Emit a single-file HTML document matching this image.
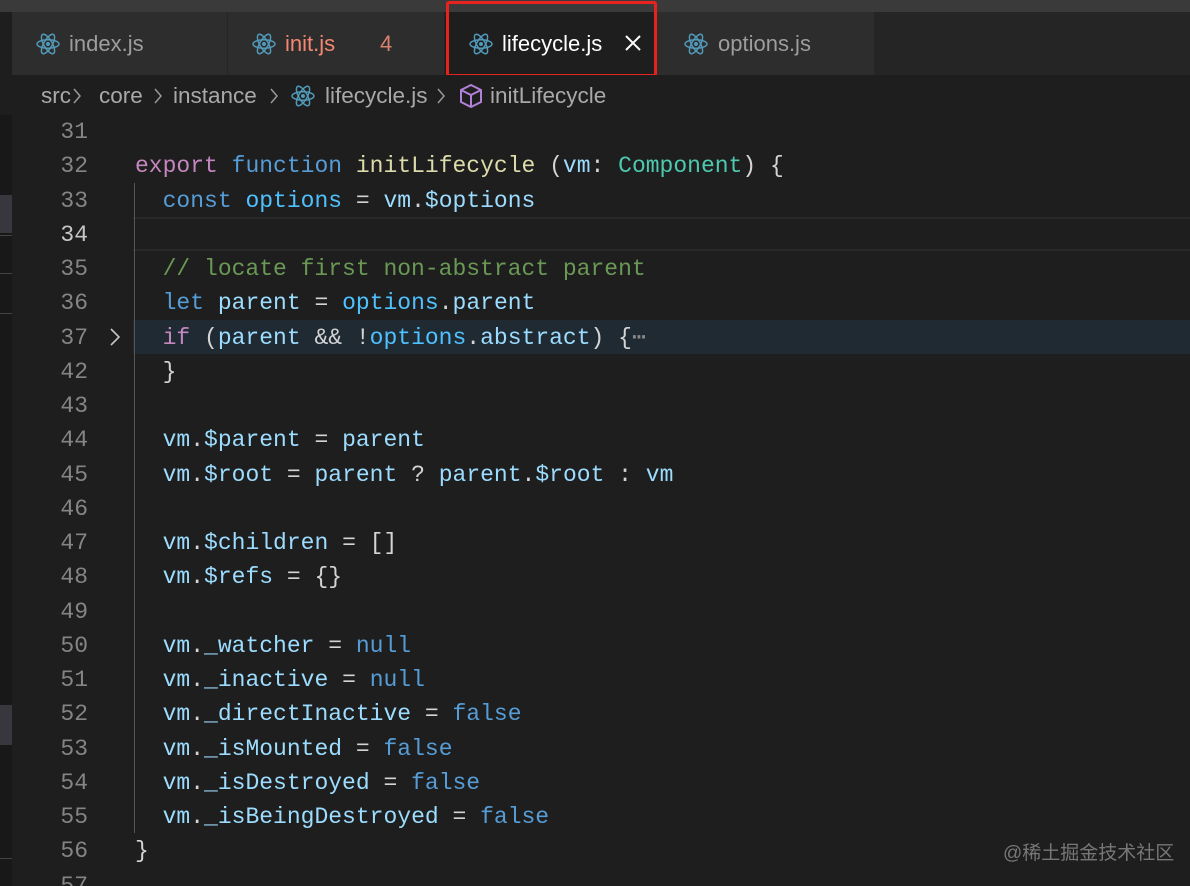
<!DOCTYPE html>
<html style="width:1190px;height:886px;overflow:hidden"><head><meta charset="utf-8"><style>
*{margin:0;padding:0;box-sizing:border-box}
body{width:1190px;height:886px;overflow:hidden;background:#1e1e1e;position:relative;font-family:"Liberation Sans",sans-serif}
.top{position:absolute;left:0;top:0;width:1190px;height:12px;background:#3a3a3a}
.tabs{position:absolute;left:12px;top:12px;width:1178px;height:63px;background:#252526}
.tab{position:absolute;top:0;height:63px;background:#2d2d2d;color:#9d9d9d;font-size:22px;line-height:63px;border-right:1px solid #252526}
.tab svg{position:absolute;top:20px}
.tab span{position:absolute}
.bc{position:absolute;left:0;top:75px;width:1190px;height:40px;background:#1e1e1e;color:#a9a9a9;font-size:22.5px;line-height:42px}
.bc span{position:absolute;top:0}
.bc .ch{color:#999}
.left{position:absolute;left:0;top:75px;width:12px;height:811px;background:#181818}
.code{position:absolute;left:12px;top:115px;width:1178px;height:771px;overflow:hidden;font-family:"Liberation Mono",monospace;font-size:23px;line-height:34.25px;color:#d4d4d4}
.row{position:relative;height:34.25px}
.ln{position:absolute;left:0;width:76px;text-align:right;color:#858585}
.tx{position:absolute;left:123px;white-space:pre}
.k{color:#c586c0}.s{color:#569cd6}.v{color:#9cdcfe}.f{color:#dcdcaa}.t{color:#4ec9b0}.c{color:#6a9955}.o{color:#4fc1ff}
</style></head><body>
<div class="top"></div>
<div class="left">
<div style="position:absolute;top:120px;width:12px;height:38px;background:#37373d"></div>
<div style="position:absolute;top:160px;width:12px;height:1px;background:#444"></div>
<div style="position:absolute;top:198px;width:12px;height:1px;background:#444"></div>
<div style="position:absolute;top:238px;width:12px;height:1px;background:#444"></div>
<div style="position:absolute;top:630px;width:12px;height:40px;background:#37373d"></div>
<div style="position:absolute;top:783px;width:12px;height:1px;background:#444"></div>
</div>
<div class="tabs">
<div class="tab" style="left:0;width:216px"><svg width="24" height="24" viewBox="-12 -12 24 24" style="left:24px"><g fill="none" stroke="#519aba" stroke-width="1.5"><ellipse rx="11" ry="4.2"/><ellipse rx="11" ry="4.2" transform="rotate(60)"/><ellipse rx="11" ry="4.2" transform="rotate(120)"/></g><circle r="2" fill="#519aba"/></svg><span style="left:57px">index.js</span></div>
<div class="tab" style="left:216px;width:217px;color:#f48771"><svg width="24" height="24" viewBox="-12 -12 24 24" style="left:24px"><g fill="none" stroke="#519aba" stroke-width="1.5"><ellipse rx="11" ry="4.2"/><ellipse rx="11" ry="4.2" transform="rotate(60)"/><ellipse rx="11" ry="4.2" transform="rotate(120)"/></g><circle r="2" fill="#519aba"/></svg><span style="left:57px">init.js</span><span style="left:152px;color:#d7826c">4</span></div>
<div class="tab" style="left:433px;width:212px;background:#1e1e1e;color:#fff"><svg width="24" height="24" viewBox="-12 -12 24 24" style="left:24px"><g fill="none" stroke="#519aba" stroke-width="1.5"><ellipse rx="11" ry="4.2"/><ellipse rx="11" ry="4.2" transform="rotate(60)"/><ellipse rx="11" ry="4.2" transform="rotate(120)"/></g><circle r="2" fill="#519aba"/></svg><span style="left:57px">lifecycle.js</span><svg width="18" height="18" viewBox="0 0 18 18" style="left:179px;top:22px"><path d="M2 2L16 16M16 2L2 16" stroke="#fff" stroke-width="2"/></svg></div>
<div class="tab" style="left:645px;width:218px"><svg width="24" height="24" viewBox="-12 -12 24 24" style="left:27px"><g fill="none" stroke="#519aba" stroke-width="1.5"><ellipse rx="11" ry="4.2"/><ellipse rx="11" ry="4.2" transform="rotate(60)"/><ellipse rx="11" ry="4.2" transform="rotate(120)"/></g><circle r="2" fill="#519aba"/></svg><span style="left:61px">options.js</span></div>
</div>
<div style="position:absolute;left:446px;top:1px;width:211px;height:76px;border:3px solid #e8231f;border-radius:3px"></div>
<div class="bc">
<span style="left:41px">src</span>
<svg width="10" height="16" viewBox="0 0 10 16" style="position:absolute;left:72px;top:13px"><path d="M2 1L8 8L2 15" fill="none" stroke="#999" stroke-width="1.5"/></svg>
<span style="left:99px">core</span>
<svg width="10" height="16" viewBox="0 0 10 16" style="position:absolute;left:153px;top:13px"><path d="M2 1L8 8L2 15" fill="none" stroke="#999" stroke-width="1.5"/></svg>
<span style="left:173px">instance</span>
<svg width="10" height="16" viewBox="0 0 10 16" style="position:absolute;left:269px;top:13px"><path d="M2 1L8 8L2 15" fill="none" stroke="#999" stroke-width="1.5"/></svg>
<svg width="24" height="24" viewBox="-12 -12 24 24" style="position:absolute;left:291px;top:9px"><g fill="none" stroke="#519aba" stroke-width="1.5"><ellipse rx="11" ry="4.2"/><ellipse rx="11" ry="4.2" transform="rotate(60)"/><ellipse rx="11" ry="4.2" transform="rotate(120)"/></g><circle r="2" fill="#519aba"/></svg>
<span style="left:325px">lifecycle.js</span>
<svg width="10" height="16" viewBox="0 0 10 16" style="position:absolute;left:436px;top:13px"><path d="M2 1L8 8L2 15" fill="none" stroke="#999" stroke-width="1.5"/></svg>
<svg width="24" height="26" viewBox="0 0 24 26" style="position:absolute;left:459px;top:8px"><path d="M12 2L22 7V19L12 24L2 19V7Z M2 7L12 12L22 7 M12 12V24" fill="none" stroke="#b180d7" stroke-width="2"/></svg>
<span style="left:490px">initLifecycle</span></div>
<div style="position:absolute;left:133px;top:320px;width:1057px;height:34px;background:#1f2a33"></div>
<div style="position:absolute;left:133px;top:217px;width:1057px;height:34px;border-top:2px solid #282828;border-bottom:2px solid #282828"></div>
<div style="position:absolute;left:134px;top:183px;width:1px;height:650px;background:#555"></div>
<svg width="12" height="20" viewBox="0 0 12 20" style="position:absolute;left:109px;top:327px"><path d="M2 2L10 10L2 18" fill="none" stroke="#c5c5c5" stroke-width="1.6"/></svg>
<div class="code"><div class="row"><span class="ln">31</span></div><div class="row"><span class="ln">32</span><span class="tx"><span class="k">export</span> <span class="s">function</span> <span class="f">initLifecycle</span> (<span class="v">vm</span>: <span class="t">Component</span>) {</span></div><div class="row"><span class="ln">33</span><span class="tx">  <span class="s">const</span> <span class="o">options</span> = <span class="v">vm</span>.<span class="v">$options</span></span></div><div class="row"><span class="ln" style="color:#c6c6c6">34</span></div><div class="row"><span class="ln">35</span><span class="tx">  <span class="c">// locate first non-abstract parent</span></span></div><div class="row"><span class="ln">36</span><span class="tx">  <span class="s">let</span> <span class="v">parent</span> = <span class="o">options</span>.<span class="v">parent</span></span></div><div class="row"><span class="ln">37</span><span class="tx">  <span class="k">if</span> (<span class="v">parent</span> &amp;&amp; !<span class="o">options</span>.<span class="v">abstract</span>) {<span style="color:#888">⋯</span></span></div><div class="row"><span class="ln">42</span><span class="tx">  }</span></div><div class="row"><span class="ln">43</span></div><div class="row"><span class="ln">44</span><span class="tx">  <span class="v">vm</span>.<span class="v">$parent</span> = <span class="v">parent</span></span></div><div class="row"><span class="ln">45</span><span class="tx">  <span class="v">vm</span>.<span class="v">$root</span> = <span class="v">parent</span> ? <span class="v">parent</span>.<span class="v">$root</span> : <span class="v">vm</span></span></div><div class="row"><span class="ln">46</span></div><div class="row"><span class="ln">47</span><span class="tx">  <span class="v">vm</span>.<span class="v">$children</span> = []</span></div><div class="row"><span class="ln">48</span><span class="tx">  <span class="v">vm</span>.<span class="v">$refs</span> = {}</span></div><div class="row"><span class="ln">49</span></div><div class="row"><span class="ln">50</span><span class="tx">  <span class="v">vm</span>.<span class="v">_watcher</span> = <span class="s">null</span></span></div><div class="row"><span class="ln">51</span><span class="tx">  <span class="v">vm</span>.<span class="v">_inactive</span> = <span class="s">null</span></span></div><div class="row"><span class="ln">52</span><span class="tx">  <span class="v">vm</span>.<span class="v">_directInactive</span> = <span class="s">false</span></span></div><div class="row"><span class="ln">53</span><span class="tx">  <span class="v">vm</span>.<span class="v">_isMounted</span> = <span class="s">false</span></span></div><div class="row"><span class="ln">54</span><span class="tx">  <span class="v">vm</span>.<span class="v">_isDestroyed</span> = <span class="s">false</span></span></div><div class="row"><span class="ln">55</span><span class="tx">  <span class="v">vm</span>.<span class="v">_isBeingDestroyed</span> = <span class="s">false</span></span></div><div class="row"><span class="ln">56</span><span class="tx">}</span></div><div class="row"><span class="ln">57</span></div></div>
<div style="position:absolute;left:1003px;top:838px;color:#777;font-size:19px;font-family:'Liberation Sans','Noto Sans CJK SC',sans-serif">@稀土掘金技术社区</div>
</body></html>
